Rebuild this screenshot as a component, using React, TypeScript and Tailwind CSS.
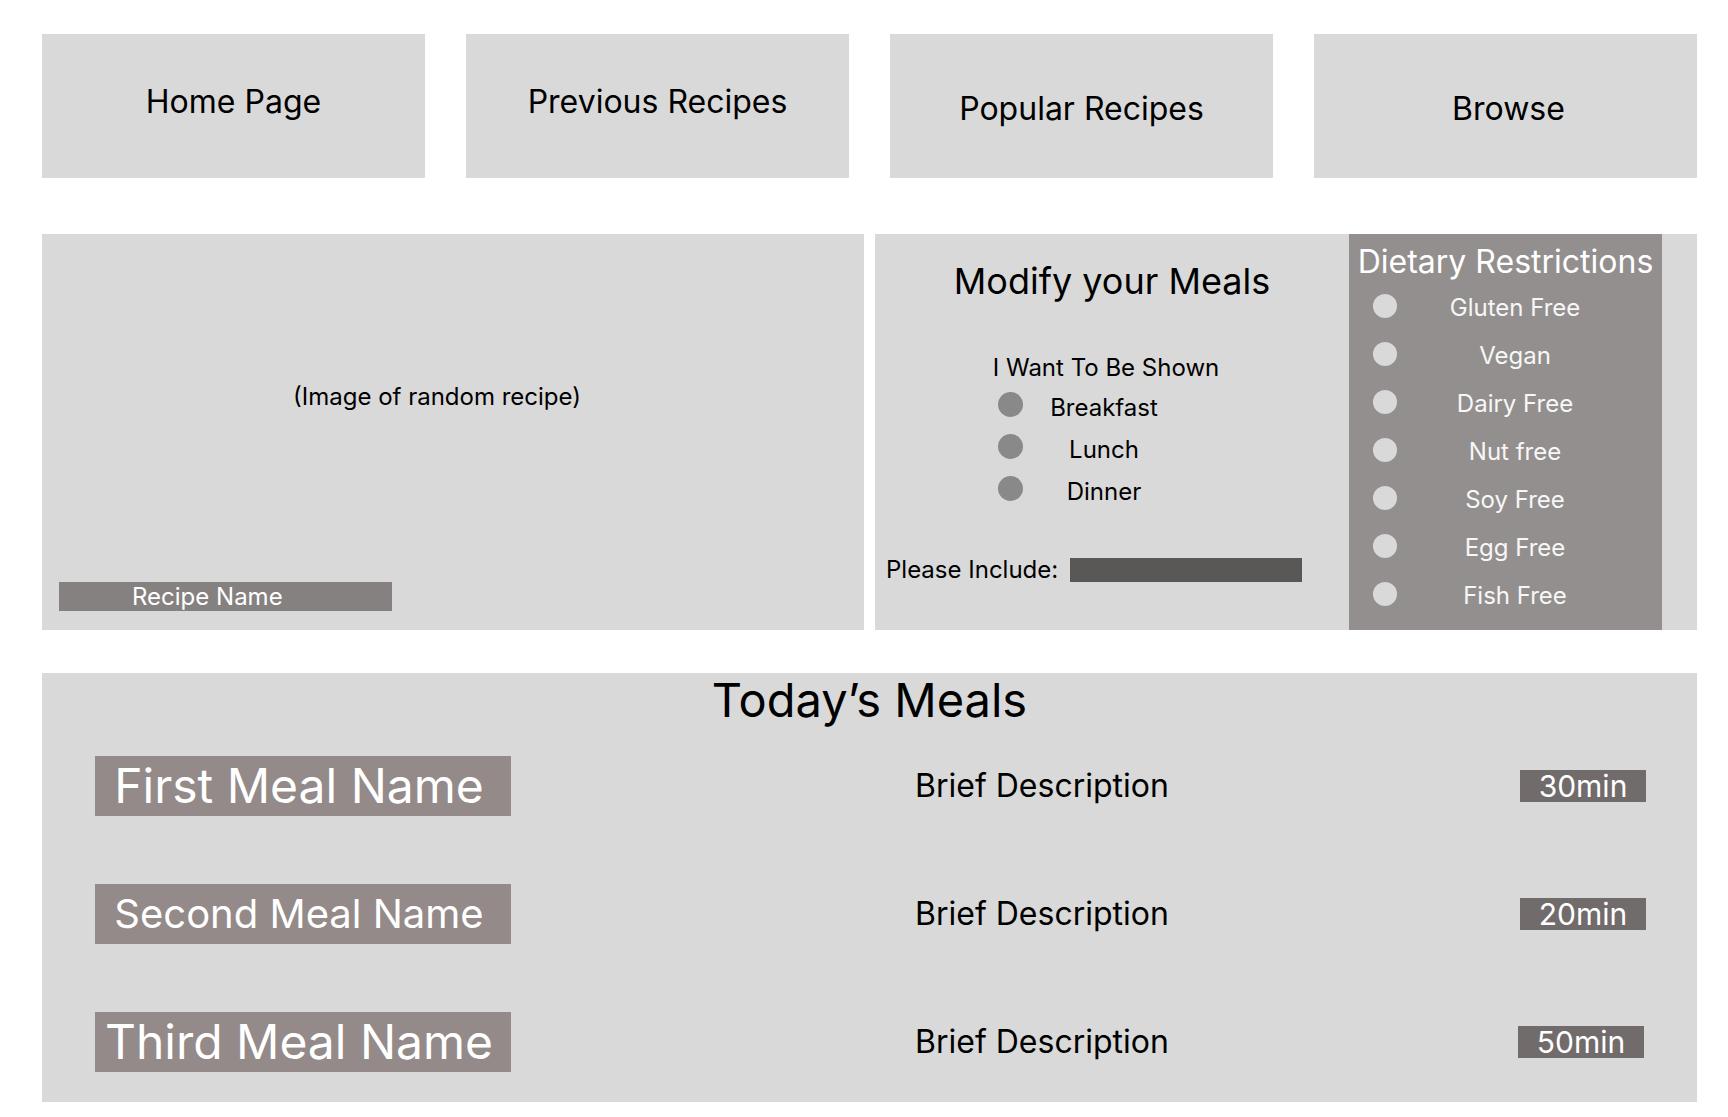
import React from "react";

const NAV = [
  { label: "Home Page", cls: "pb-[8px]" },
  { label: "Previous Recipes", cls: "pb-[8px]" },
  { label: "Popular Recipes", cls: "pt-[5px]" },
  { label: "Browse", cls: "pt-[5px] pl-[6px]" },
];

const MEALS = ["Breakfast", "Lunch", "Dinner"];

const DIET = [
  "Gluten Free",
  "Vegan",
  "Dairy Free",
  "Nut free",
  "Soy Free",
  "Egg Free",
  "Fish Free",
];

const TODAY = [
  { name: "First Meal Name", size: "text-[48px]", time: "30min", badge: "" },
  { name: "Second Meal Name", size: "text-[40px]", time: "20min", badge: "" },
  { name: "Third Meal Name", size: "text-[48px]", time: "50min", badge: "mr-[2px]" },
];

export default function App() {
  return (
    <div
      className="min-h-[1117px] w-[1728px] bg-white pl-[42px] pr-[31px] pt-[34px] text-black"
      style={{ fontFamily: "Inter, 'Noto Sans', sans-serif" }}
    >
      {/* Navigation */}
      <div className="grid grid-cols-4 gap-[41px]">
        {NAV.map((n) => (
          <div
            key={n.label}
            className={`flex h-[144px] items-center justify-center bg-[#d9d9d9] text-[32px] leading-none ${n.cls}`}
          >
            {n.label}
          </div>
        ))}
      </div>

      {/* Middle row */}
      <div className="mt-[56px] flex h-[396px] gap-[11px]">
        {/* Image panel */}
        <div className="flex flex-1 flex-col bg-[#d9d9d9]">
          <div className="pr-[32px] pt-[151px] text-center text-[24px] leading-none">
            (Image of random recipe)
          </div>
          <div className="mt-auto mb-[19px] ml-[17px] flex h-[29px] w-[333px] items-center bg-[#858180] pl-[73px] text-[24px] leading-none text-white">
            Recipe Name
          </div>
        </div>

        {/* Modify panel */}
        <div className="flex flex-1 bg-[#d9d9d9]">
          <div className="flex w-[474px] flex-col pt-[29px]">
            <div className="text-center text-[36px] leading-none">Modify your Meals</div>
            <div className="ml-[116px] mt-[57px] w-[230px] whitespace-nowrap text-center text-[24px] leading-none">
              I Want To Be Shown
            </div>
            <div className="mt-[3px] flex flex-col">
              {MEALS.map((m) => (
                <div key={m} className="flex h-[42px] items-center pl-[123px]">
                  <div className="h-[25px] w-[25px] rounded-full bg-[#898989]" />
                  <div className="w-[162px] pt-[7px] text-center text-[24px] leading-none">{m}</div>
                </div>
              ))}
            </div>
            <div className="mt-[49px] flex h-[24px] items-center pl-[11px]">
              <span className="w-[184px] whitespace-nowrap text-[24px] leading-none">
                Please Include:
              </span>
              <div className="h-[24px] w-[232px] bg-[#5a5857]" />
            </div>
          </div>

          <div className="flex w-[313px] flex-col bg-[#938f8e] pt-[12px] text-white">
            <div className="whitespace-nowrap text-center text-[32px] leading-none">
              Dietary Restrictions
            </div>
            <div className="mt-[4px] flex flex-col">
              {DIET.map((d) => (
                <div key={d} className="flex h-[48px] items-center pl-[24px] pr-[29px]">
                  <div className="h-[24px] w-[24px] shrink-0 rounded-full bg-[#d9d9d9]" />
                  <div className="flex-1 pt-[4px] text-center text-[24px] leading-none text-[#f7f7f7]">
                    {d}
                  </div>
                </div>
              ))}
            </div>
          </div>
        </div>
      </div>

      {/* Today's meals */}
      <div className="mt-[43px] flex h-[429px] flex-col bg-[#d9d9d9] pt-[3px]">
        <div className="text-center text-[47px] leading-none">Today’s Meals</div>
        <div className="mt-[33px] flex flex-col gap-[68px]">
          {TODAY.map((t) => (
            <div key={t.name} className="flex h-[60px] items-center pl-[53px] pr-[51px]">
              <div
                className={`flex h-[60px] w-[416px] items-center justify-center whitespace-nowrap bg-[#938a89] pr-[8px] leading-none text-white ${t.size}`}
              >
                {t.name}
              </div>
              <div className="ml-[404px] text-[32px] leading-none">Brief Description</div>
              <div
                className={`ml-auto flex h-[32px] w-[126px] items-center justify-center bg-[#716b6b] text-[30px] leading-none text-white ${t.badge}`}
              >
                {t.time}
              </div>
            </div>
          ))}
        </div>
      </div>
    </div>
  );
}
